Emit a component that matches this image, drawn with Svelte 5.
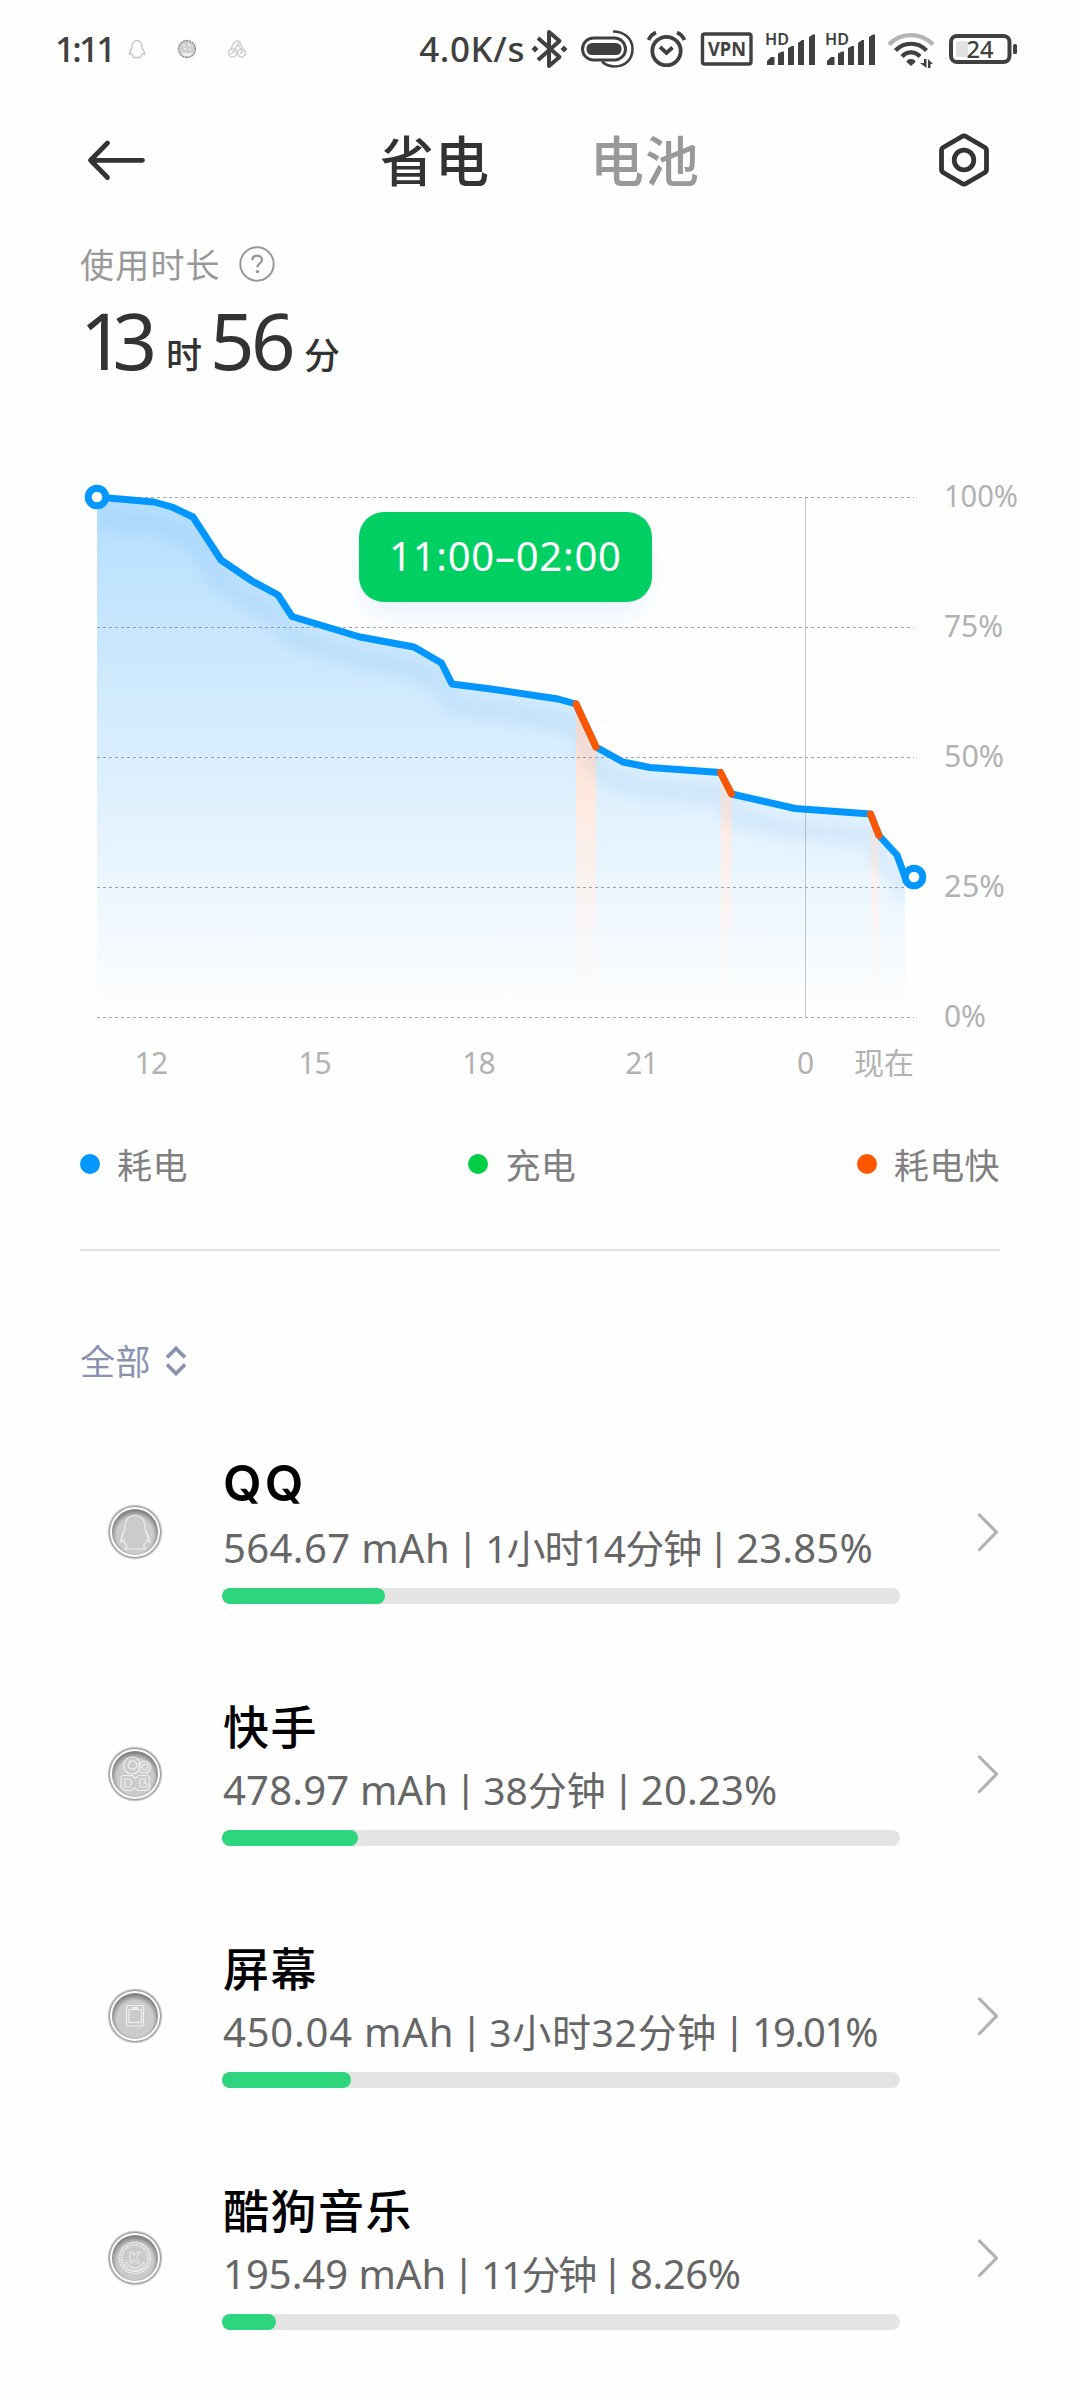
<script>
  const apps = [
    { id: 'qq', name: 'QQ', power: '564.67 mAh', time: '1小时14分钟', percent: '23.85%', share: 24 },
    { id: 'kuaishou', name: '快手', power: '478.97 mAh', time: '38分钟', percent: '20.23%', share: 20 },
    { id: 'display', name: '屏幕', power: '450.04 mAh', time: '3小时32分钟', percent: '19.01%', share: 19 },
    { id: 'kugou', name: '酷狗音乐', power: '195.49 mAh', time: '11分钟', percent: '8.26%', share: 8 }
  ];

  const legend = [
    { label: '耗电', tone: 'blue' },
    { label: '充电', tone: 'green' },
    { label: '耗电快', tone: 'orange' }
  ];

  const points = [
    [97, 497], [154, 502], [172, 507], [193, 517], [221, 560], [252, 581], [278, 595],
    [292, 616.5], [360, 637], [414, 647], [441.5, 663], [452, 684], [491, 689], [558, 699],
    [576, 704], [596, 747], [623, 762], [650, 767.5], [720.5, 772.5], [731.5, 794],
    [795, 808.5], [870.5, 814], [879, 835.5], [897, 855], [905, 877]
  ];
  const fast = [[14, 15], [18, 19], [21, 22]];

  const line = points.map((p) => p.join(',')).join(' ');
  const area = `97,1017 ${line} 905,1017`;
  const bands = fast.map(([a, b]) => {
    const [x1, y1] = points[a];
    const [x2, y2] = points[b];
    return { x1, y1, x2, y2, shape: `${x1},1017 ${x1},${y1} ${x2},${y2} ${x2},1017` };
  });

  const levels = [
    { y: 497.5, label: '100%', w: 74 },
    { y: 627.5, label: '75%', w: 59 },
    { y: 757.5, label: '50%', w: 60 },
    { y: 887.5, label: '25%', w: 61 },
    { y: 1017.5, label: '0%', w: 42 }
  ];
  const hours = [
    { x: 151, label: '12' },
    { x: 314.5, label: '15' },
    { x: 478.5, label: '18' },
    { x: 641.5, label: '21' },
    { x: 805, label: '0' }
  ];
</script>

{#snippet signal()}
  <svg class="ico s8" width="52" height="40" viewBox="764 29 52 40">
    <text x="765" y="45" font-size="16" font-weight="600" textLength="24" lengthAdjust="spacingAndGlyphs">HD</text>
    <path d="M767 65v-4l4-4h3.500v8zM778 65V53.500l4-2h2v13.500zM788 65V48l4-2h2v19zM798 65V43l4-3h2v25zM809 65V37l4-2.500h2V65z" />
  </svg>
{/snippet}

<div class="screen">
  <header class="status">
    <span class="clock">1:11</span>
    <svg class="notes" width="120" height="22" viewBox="127 38 120 22" fill="none" stroke="#c4c4c4" stroke-width="1.300">
      <path d="M132 48c-.5-4 1.500-7.500 5-7.500s5.500 3.500 5 7.500c1.500 2 3 4.500 2.500 6.500l-2-1-2.500 4h-6l-2.500-4-2 1c-.5-2 1-4.500 2.500-6.500z" />
      <circle cx="187" cy="49" r="8.500" fill="#cfcfcf" stroke="#8e8e8e" stroke-dasharray="2.500 .7" />
      <path d="M183 45l2 1M188 44l3 2M184 49h2M189 49l2 1" stroke="#f4f4f4" />
      <path d="M181 53h12l-3 3h-6z" fill="#efefef" stroke="none" />
      <path d="M231 50c1-4 3-9 6-9s4 4 6 8M234 51l4-7 4 7" stroke-width="1.600" stroke-dasharray="1.500 .5" />
      <circle cx="232.500" cy="53" r="4" stroke-width="1.600" stroke-dasharray="1.500 .5" />
      <circle cx="241.500" cy="53" r="4" stroke-width="1.600" stroke-dasharray="1.500 .5" />
      <path d="M231 54l3-3M240 54l3-3" />
    </svg>
    <span class="rate">4.0K/s</span>
    <svg class="ico" width="37" height="40" viewBox="531 29 37 40" fill="none" stroke="#404040" stroke-width="4">
      <path d="M538 38l21.500 19-10.500 9V32l10.500 9L538 60" stroke-linejoin="round" />
      <path d="M531.500 49l3.500-3.500 3.500 3.500-3.500 3.500zM560.500 49l3.500-3.500 3.500 3.500-3.500 3.500z" fill="#404040" stroke="none" />
    </svg>
    <svg class="ico s12" width="56" height="40" viewBox="580 29 56 40" fill="none" stroke="#404040">
      <rect x="582.500" y="38" width="43" height="22" rx="11" stroke-width="3" />
      <rect x="586.500" y="43" width="35" height="12" rx="5.500" fill="#404040" stroke="none" />
      <path d="M613 31.500c11 0 19.500 7 19.500 17.500S625 66.500 615 66.500c-6 0-10-2-13-5" stroke-width="2.600" />
    </svg>
    <svg class="ico s10" width="42" height="40" viewBox="646 29 42 40" fill="none" stroke="#404040" stroke-width="3.800">
      <circle cx="666.500" cy="51" r="14.200" />
      <path d="M660 47l6.500 6 6-5.500M648.500 40c1.500-3.500 4-6 7.500-7.500M684.500 40c-1.500-3.500-4-6-7.500-7.500" />
    </svg>
    <svg class="ico s12" width="54" height="40" viewBox="700 29 54 40">
      <rect x="702.500" y="34" width="48.500" height="30" rx="2" fill="none" stroke="#404040" stroke-width="3.400" />
      <text x="708" y="56" font-size="19" font-weight="700" textLength="38" lengthAdjust="spacingAndGlyphs">VPN</text>
    </svg>
    <span class="gap2"></span>
    {@render signal()}
    {@render signal()}
    <svg class="ico s10" width="50" height="40" viewBox="886 29 50 40" fill="none" stroke="#404040" stroke-width="4.200">
      <path d="M889 44.500c12-12.500 32-12.500 44 0" stroke="#b4b4b4" />
      <path d="M895.500 50.500c8.500-9 22.500-9 31 0M902 56.500c5-5.500 13-5.500 18 0" />
      <path d="M911 59c3 0 4.500 1.500 4.500 3l-4.500 4-4.500-4c0-1.500 1.500-3 4.500-3zM920 63l4-0v-4h2.500v9zM928 59l5 5h-2.500v4H928z" fill="#404040" stroke="none" />
    </svg>
    <svg class="ico s12" width="70" height="40" viewBox="948 29 70 40">
      <rect x="951" y="36" width="58.500" height="26" rx="6" fill="none" stroke="#404040" stroke-width="4" />
      <rect x="956" y="41" width="12" height="16" rx="2.500" fill="#e2e2e2" />
      <rect x="1013" y="44" width="4" height="10" rx="1.500" />
      <text x="966.500" y="58" font-size="23" font-weight="500" textLength="27" lengthAdjust="spacingAndGlyphs">24</text>
    </svg>
  </header>

  <nav class="topbar">
    <svg width="60" height="60" viewBox="86 130 60 60" fill="none" stroke="#333" stroke-width="4.800" stroke-linecap="round" stroke-linejoin="round">
      <path d="M107.500 143L90.500 160.300l17 17.200M91 160.300h51.500" />
    </svg>
    <div class="tabs">
      <span class="tab active">省电</span>
      <span class="tab">电池</span>
    </div>
    <svg width="60" height="60" viewBox="934 130 60 60" fill="none" stroke="#333" stroke-width="4.800" stroke-linejoin="round">
      <path d="M962 136.500q2-1.200 4 0l18.500 10.800q2 1.200 2 3.200v19q0 2-2 3.200L966 183.500q-2 1.200-4 0l-18.500-10.800q-2-1.200-2-3.200v-19q0-2 2-3.200z" />
      <circle cx="964" cy="160" r="9.800" />
    </svg>
  </nav>

  <section class="summary">
    <div class="caption">
      <span class="label">使用时长</span>
      <svg width="36" height="36" viewBox="0 0 36 36" fill="none" stroke="#999">
        <circle cx="18" cy="18" r="16.700" stroke-width="2" />
        <path d="M13.200 14.200c.2-2.800 2.200-4.500 4.900-4.500 2.800 0 4.900 1.700 4.900 4.300 0 3.400-4.600 3.500-4.600 7.300" stroke-width="2.400" />
        <circle cx="18.400" cy="25.600" r="1.700" fill="#999" stroke="none" />
      </svg>
    </div>
    <div class="duration">
      <span class="num n1">13</span><span class="unit u1">时</span><span class="num n2">56</span><span class="unit">分</span>
    </div>
  </section>

  <svg class="chart" width="1080" height="650" viewBox="0 460 1080 650">
    <defs>
      <linearGradient id="fillBlue" gradientUnits="userSpaceOnUse" x1="0" y1="497" x2="0" y2="1017">
        <stop offset="0" stop-color="#0a94ff" stop-opacity=".3" />
        <stop offset="1" stop-color="#0a94ff" stop-opacity="0" />
      </linearGradient>
      <linearGradient id="fillOrange" gradientUnits="userSpaceOnUse" x1="0" y1="704" x2="0" y2="1017">
        <stop offset="0" stop-color="#ffe0d0" />
        <stop offset=".3" stop-color="#ffe9df" />
        <stop offset="1" stop-color="#fffdfc" stop-opacity=".3" />
      </linearGradient>
      <clipPath id="under"><polygon points={area} /></clipPath>
      <filter id="soft" x="-10%" y="-10%" width="120%" height="130%"><feGaussianBlur stdDeviation="7" /></filter>
      <filter id="glow" x="-20%" y="-50%" width="140%" height="220%"><feGaussianBlur stdDeviation="12" /></filter>
    </defs>

    <polygon points={area} fill="url(#fillBlue)" />
    {#each bands as band}
      <polygon points={band.shape} fill="url(#fillOrange)" />
    {/each}
    <g clip-path="url(#under)">
      <polyline class="shade" points={line} transform="translate(0 22)" filter="url(#soft)" />
    </g>

    {#each levels as level}
      <line class="grid" x1="97" x2="914" y1={level.y} y2={level.y} />
      <text class="axis" x="944" y={level.y + 9} textLength={level.w} lengthAdjust="spacingAndGlyphs">{level.label}</text>
    {/each}
    <line class="midnight" x1="805.500" x2="805.500" y1="497" y2="1017" />

    <polyline class="curve" points={line} />
    {#each bands as band}
      <line class="curve hot" x1={band.x1} y1={band.y1} x2={band.x2} y2={band.y2} />
    {/each}
    <circle class="knob" cx="97" cy="497" r="8.800" />
    <circle class="knob" cx="914" cy="877" r="8.800" />

    <rect x="364" y="530" width="283" height="84" rx="26" fill="#2a9bff" opacity=".1" filter="url(#glow)" />
    <rect x="359" y="512" width="293" height="90" rx="25" fill="#00d062" />
    <text class="range" x="389" y="571" textLength="232" lengthAdjust="spacing">11:00–02:00</text>

    {#each hours as hour}
      <text class="axis mid" x={hour.x} y="1074">{hour.label}</text>
    {/each}
    <text class="axis now" x="854" y="1074">现在</text>
  </svg>

  <div class="legend">
    {#each legend as item}
      <span class="key"><i class={item.tone}></i><span>{item.label}</span></span>
    {/each}
  </div>
  <div class="rule"></div>

  <div class="filter">
    <span>全部</span>
    <svg width="22" height="32" viewBox="0 0 22 32" fill="none" stroke="#8a92b2" stroke-width="3.800">
      <path d="M2 12.500L11 3.500l9 9M2 19.500l9 9 9-9" />
    </svg>
  </div>

  <main>
    {#each apps as app}
      <article class="row {app.id}">
        <svg class="badge" width="60" height="60" viewBox="-30 -30 60 60" fill="none" stroke="#eee" stroke-width="1.200">
          <defs>
            <radialGradient id="disc-{app.id}" cy=".56">
              <stop offset=".76" stop-color="#cbcbcb" />
              <stop offset="1" stop-color="#858585" />
            </radialGradient>
            <radialGradient id="halo-{app.id}">
              <stop offset=".88" stop-color="#7c7c7c" />
              <stop offset="1" stop-color="#8a8a8a" stop-opacity="0" />
            </radialGradient>
          </defs>
          <circle r="28" fill="url(#halo-{app.id})" stroke="none" />
          <circle r="24" fill="url(#disc-{app.id})" stroke="#fff" stroke-width="2" />
          {#if app.id === 'qq'}
            <path d="M-10-4C-10-12-6-16.500 0-16.500S10-12 10-4c0 4 5 8 4.500 14l-3-2c-.5 3-2 4.500-3 5.500l2 3.500H-10l2-3.500c-1-1-2.500-2.500-3-5.500l-3 2C-14.500 4-10 0-10-4z" />
            <path d="M-11-1c-1 3-2 6-3 9M11-1c1 3 2 6 3 9" />
          {:else if app.id === 'kuaishou'}
            <circle cx="-3" cy="-8.500" r="8.500" />
            <circle cx="-2.500" cy="-9" r="4.200" />
            <circle cx="9.500" cy="-7" r="6" />
            <circle cx="10" cy="-7" r="2.800" />
            <path d="M-14 4q0-2.500 2.500-2.500h9l3 3 3-3h8q3 0 3 3v9q0 3-3 3h-9l-3-3-3 3h-7l-3.500-4zM-10 5h5q3 4 0 8h-5zM5 5h6l-2 4 3 1v3H5z" />
          {:else if app.id === 'display'}
            <rect x="-8.500" y="-10.500" width="17" height="20.500" rx="1.500" />
            <rect x="-6" y="-6.500" width="12.500" height="13" />
            <rect x="-2.500" y="-9" width="5.500" height="2" fill="#eee" stroke="none" />
          {:else}
            <circle r="15.500" stroke-dasharray="3 .6" />
            <circle r="13" stroke-width="1.600" stroke-dasharray="1.500 1" />
            <path d="M-5-6h3v4l4-4h3L1 0l4 5H2l-4-4v4h-3z" stroke-width=".9" />
            <path d="M-11 6q3 7 11 7t11-7M-9 4q4 6 9 6t9-6" stroke-width="1.800" stroke-dasharray="1.500 .8" />
          {/if}
        </svg>
        <div class="body">
          <h2 class:latin={app.id === 'qq'}>{app.name}</h2>
          <p><span class="power">{app.power}</span><span class="sep">|</span><span class="time">{app.time}</span><span class="sep">|</span><span class="percent">{app.percent}</span></p>
          <div class="track"><div class="bar" style="width: {app.share}%"></div></div>
        </div>
        <svg class="chev" width="24" height="42" viewBox="0 0 24 42" fill="none" stroke="#b2b2b2" stroke-width="3.200" stroke-linecap="round">
          <path d="M3.500 4L20.500 21.200 3.500 38.500" stroke-linejoin="round" />
        </svg>
      </article>
    {/each}
  </main>
</div>

<style>
  :global(body) {
    margin: 0;
    background: #fefefe;
  }
  .screen {
    width: 1080px;
    height: 2400px;
    overflow: hidden;
    background: #fefefe;
    font-family: 'Noto Sans', 'Noto Sans CJK SC', sans-serif;
    color: #333;
  }
  svg {
    display: block;
    flex: none;
  }
  .status {
    display: flex;
    align-items: center;
    height: 98px;
    padding: 0 62px 0 55px;
    color: #404040;
    font-weight: 500;
    font-size: 35px;
    line-height: 50px;
  }
  .clock {
    width: 72px;
    letter-spacing: -2.8px;
    white-space: nowrap;
  }
  .rate {
    margin-left: auto;
    margin-right: 6px;
    letter-spacing: 0.6px;
    white-space: nowrap;
  }
  .ico {
    fill: #404040;
  }
  .ico[fill='none'] {
    fill: none;
  }
  .s8 {
    margin-left: 8px;
  }
  .s10 {
    margin-left: 10px;
  }
  .s12 {
    margin-left: 12px;
  }
  .gap2 {
    width: 2px;
  }
  .topbar {
    display: flex;
    align-items: center;
    justify-content: space-between;
    height: 124px;
    padding: 0 86px;
  }
  .tabs {
    display: flex;
    gap: 100px;
  }
  .tab {
    font-size: 54px;
    line-height: 78px;
    padding-top: 2px;
    font-weight: 500;
    letter-spacing: 1px;
    color: #999;
  }
  .tab.active {
    color: #333;
  }
  .summary {
    height: 226px;
    padding: 12px 80px 0;
  }
  .caption {
    display: flex;
    align-items: center;
    gap: 18px;
    height: 60px;
    font-size: 34px;
    letter-spacing: 1.2px;
    color: #999;
  }
  .label {
    padding-bottom: 2px;
  }
  .duration {
    display: flex;
    align-items: baseline;
    height: 100px;
    line-height: 92px;
  }
  .num {
    font-size: 78px;
    letter-spacing: -3.5px;
  }
  .n1 {
    width: 86px;
    letter-spacing: -12px;
  }
  .n2 {
    width: 94px;
  }
  .unit {
    font-size: 36px;
    font-weight: 500;
    transform: translateY(-1px);
  }
  .u1 {
    width: 44px;
  }
  .shade {
    fill: none;
    stroke: #1579cf;
    stroke-width: 18;
    opacity: 0.075;
  }
  .curve {
    fill: none;
    stroke: #0297ff;
    stroke-width: 7;
    stroke-linejoin: round;
  }
  .hot {
    stroke: #ff5600;
    stroke-linecap: round;
  }
  .knob {
    fill: #fff;
    stroke: #0297ff;
    stroke-width: 7;
  }
  .grid {
    stroke: #6e7880;
    stroke-opacity: 0.65;
    stroke-width: 1;
    stroke-dasharray: 3 3;
  }
  .midnight {
    stroke: #707880;
    stroke-opacity: 0.4;
  }
  .axis {
    font-size: 30px;
    fill: #b2b2b2;
  }
  .mid {
    text-anchor: middle;
    letter-spacing: -1px;
  }
  .range {
    font-size: 40px;
    fill: #fff;
  }
  .legend {
    display: flex;
    justify-content: space-between;
    align-items: center;
    height: 139px;
    padding: 0 80px 32px;
    font-size: 35px;
    letter-spacing: 0.4px;
    color: #808080;
    box-sizing: border-box;
  }
  .key {
    display: flex;
    align-items: center;
    gap: 17px;
  }
  .key span {
    margin-top: -1px;
  }
  .key i {
    width: 20px;
    height: 20px;
    border-radius: 50%;
  }
  .blue {
    background: #0297ff;
  }
  .green {
    background: #00cf46;
  }
  .orange {
    background: #ff5600;
  }
  .rule {
    height: 2px;
    margin: 0 80px;
    background: #e2e2e2;
  }
  .filter {
    display: flex;
    align-items: center;
    gap: 14px;
    height: 160px;
    box-sizing: border-box;
    padding: 59px 80px 0;
    font-size: 35px;
    letter-spacing: 0.5px;
    color: #8a92b2;
  }
  .filter span {
    margin-top: -3px;
  }
  .row {
    display: flex;
    align-items: center;
    height: 242px;
    padding: 0 80px;
  }
  .badge {
    margin-left: 24.5px;
    margin-right: 57.5px;
  }
  .body {
    width: 678px;
    height: 160px;
  }
  h2 {
    margin: 0;
    padding-left: 1px;
    font-size: 46px;
    line-height: 64px;
    font-weight: 500;
    letter-spacing: 1.5px;
    color: #000;
  }
  .latin {
    font-family: Inter, sans-serif;
    font-size: 50px;
    font-weight: 600;
    line-height: 62px;
    padding-bottom: 2px;
    letter-spacing: 3px;
  }
  p {
    display: flex;
    margin: 0 0 9px;
    padding-left: 1px;
    font-size: 40px;
    line-height: 63px;
    color: #666;
    white-space: nowrap;
  }
  .percent {
    letter-spacing: 0.2px;
  }
  .time {
    font-size: 39px;
  }
  .sep {
    width: 35px;
    font-size: 36px;
    font-weight: 500;
    line-height: 59px;
    text-align: center;
  }
  .qq .power {
    letter-spacing: 0.4px;
  }
  .qq .time {
    letter-spacing: -1px;
  }
  .kuaishou .power {
    letter-spacing: 0.2px;
  }
  .display .power {
    letter-spacing: 0.8px;
  }
  .display .time {
    letter-spacing: 0.7px;
  }
  .display .percent {
    letter-spacing: -1.8px;
  }
  .kugou .time {
    letter-spacing: -2.2px;
  }
  .kugou .percent {
    letter-spacing: -0.4px;
  }
  .track {
    height: 16px;
    border-radius: 8px;
    background: #e4e4e4;
  }
  .bar {
    height: 16px;
    border-radius: 8px;
    background: #2dd57d;
  }
  .chev {
    margin-left: 76px;
  }
</style>
